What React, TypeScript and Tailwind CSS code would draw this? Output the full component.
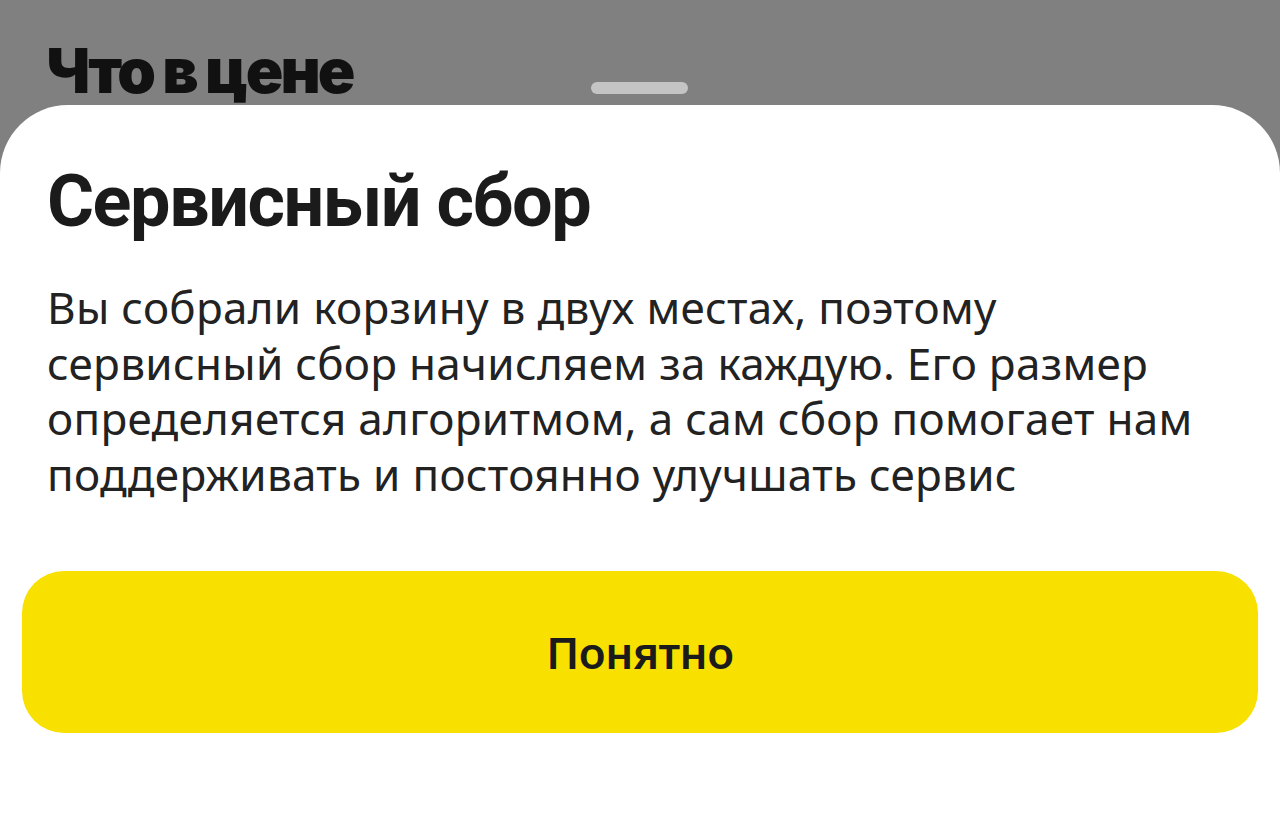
export default function App() {
  return (
    <div className="w-[1280px] h-[833px] bg-[#808080] flex flex-col overflow-hidden" style={{ fontFamily: '"Noto Sans", "Open Sans", sans-serif' }}>
      <div className="relative h-[105px] shrink-0">
        <div className="pl-[46px] pt-[35px] text-[62px] leading-[72px] font-black tracking-[-3px] text-[#111]" style={{ fontFamily: 'Inter, "Noto Sans", sans-serif' }}>
          Что в цене
        </div>
        <div className="absolute left-[591px] top-[82px] w-[97px] h-[12px] rounded-full bg-[#c4c4c4]" />
      </div>
      <div className="flex-1 bg-white rounded-t-[68px] px-[22px] flex flex-col">
        <h1 className="pl-[25px] pt-[55px] text-[72px] leading-[84px] font-bold tracking-[-1.5px] text-[#1b1b1b]" style={{ fontFamily: 'Roboto, "Noto Sans", sans-serif' }}>
          Сервисный сбор
        </h1>
        <p className="pl-[25px] mt-[36px] text-[44px] leading-[55.5px] text-[#222] tracking-[0.3px]">
          Вы собрали корзину в двух местах, поэтому
          <br />
          сервисный сбор начисляем за каждую. Его размер
          <br />
          определяется алгоритмом, а сам сбор помогает нам
          <br />
          поддерживать и постоянно улучшать сервис
        </p>
        <button className="mt-[69px] h-[162px] w-full rounded-[42px] bg-[#f8e000] text-[44px] font-semibold text-[#1b1b1b] flex items-center justify-center tracking-[-0.5px]">
          Понятно
        </button>
      </div>
    </div>
  );
}
